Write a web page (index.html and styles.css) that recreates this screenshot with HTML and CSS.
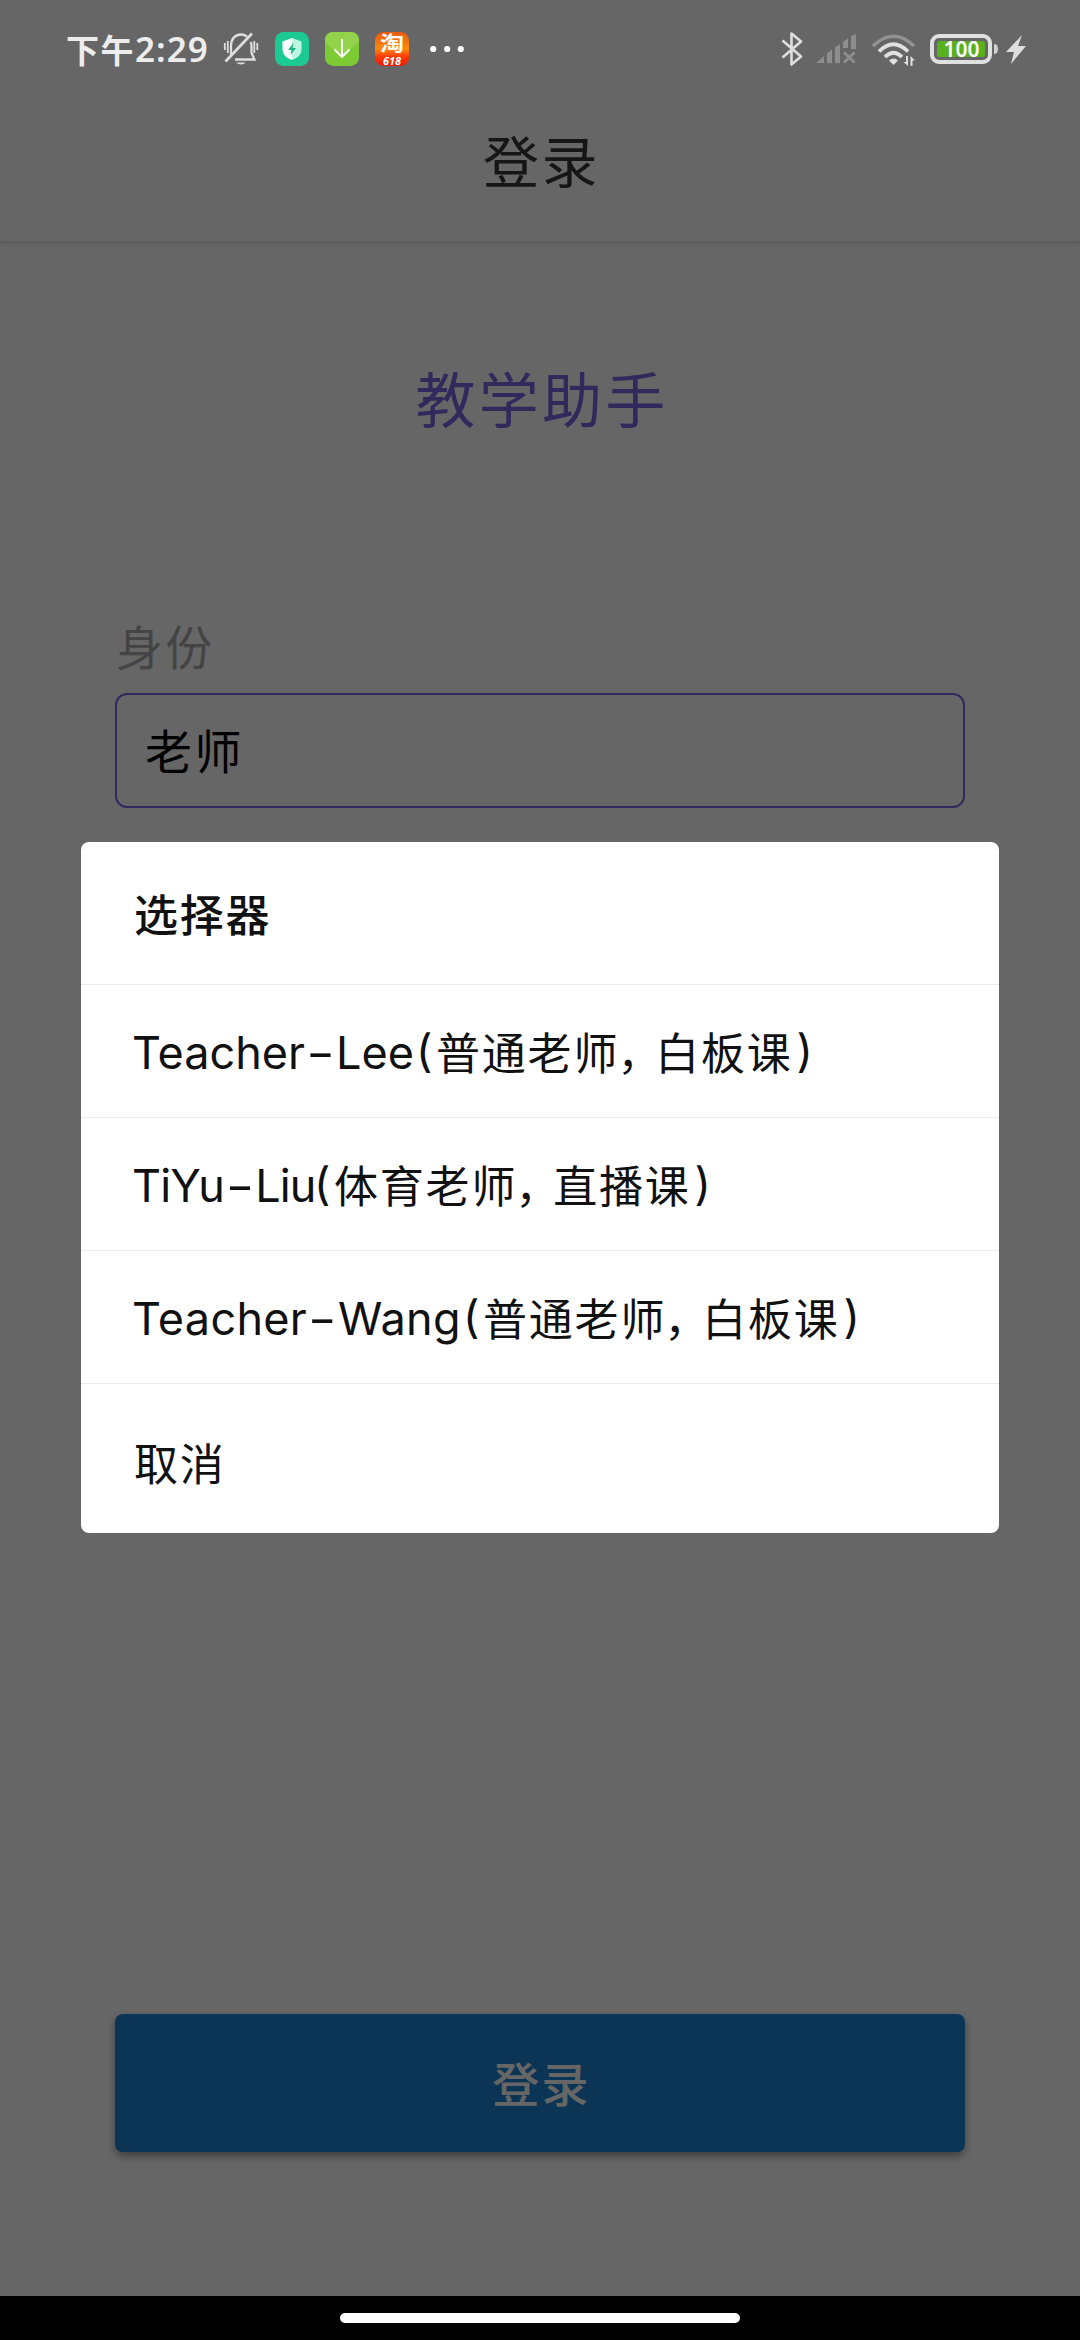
FILE: index.html
```html
<!DOCTYPE html>
<html lang="zh-CN">
<head>
<meta charset="utf-8">
<title>登录</title>
<link rel="stylesheet" href="styles.css">
</head>
<body>
<div class="screen">
  <div class="status">
    <div class="time"><span>下午</span><span class="clock">2:29</span></div>
    <div class="notices">
      <svg width="36" height="36" viewBox="0 0 36 36" fill="none" stroke="#dedede" stroke-width="2.300">
        <path d="M8 24V15C8 8 12 3.500 18 3.500C20.500 3.500 22.500 4.300 24 5.500M28 11Q28.500 13 28.500 16V22L31.500 28.500H12"/>
        <path d="M29 2.500 2.500 30.500" stroke-width="2.700"/>
        <path d="M1.800 12V19M4.800 10V22M31.300 10V22M34.300 12V19" stroke-width="1.800"/>
        <path d="M13 31.500H23Q18 35.500 13 31.500Z" fill="#dedede" stroke="none"/>
      </svg>
      <svg width="34" height="34" viewBox="0 0 34 34">
        <rect width="34" height="34" rx="8.500" fill="#1bc993"/>
        <path d="M17 6 26.500 9.500V18Q26 25 17 28Z" fill="#bdf7df"/><path d="M17 6 7.500 9.500V18Q8 25 17 28Z" fill="#fff"/>
        <path d="M18.500 11 13 18H16.500L15.500 23 21 16H17.500Z" fill="#14b783"/>
      </svg>
      <svg width="34" height="34" viewBox="0 0 34 34">
        <rect width="34" height="34" rx="8.500" fill="#7ccb35"/>
        <path d="M0 10V8.500Q0 0 8.500 0H25.500Q34 0 34 8.500V10L17 25Z" fill="#92d34b"/>
        <path d="M17 7V24.500M9.500 17.500 17 25 24.500 17.500" fill="none" stroke="#fff" stroke-width="1.800"/>
      </svg>
      <svg class="shop" width="34" height="34" viewBox="0 0 34 34">
        <defs><linearGradient id="tb" x1="0" y1="0" x2="0" y2="1"><stop offset="0" stop-color="#e85a10"/><stop offset=".5" stop-color="#fb8a10"/><stop offset=".72" stop-color="#fb3d0a"/><stop offset="1" stop-color="#ee1a05"/></linearGradient></defs>
        <rect width="34" height="34" rx="8.500" fill="url(#tb)"/>
        <text class="tao" x="17" y="18.500" text-anchor="middle" textLength="24" lengthAdjust="spacingAndGlyphs">淘</text>
        <text class="sale" x="17" y="33" text-anchor="middle" textLength="18" lengthAdjust="spacingAndGlyphs">618</text>
      </svg>
      <svg class="more" width="34" height="34" viewBox="0 0 34 34" fill="#fff"><circle cx="3.200" cy="17" r="3.100"/><circle cx="17.200" cy="17" r="3.100"/><circle cx="30.800" cy="17" r="3.100"/></svg>
    </div>
    <div class="system">
      <svg width="22" height="34" viewBox="0 0 22 34" fill="none" stroke="#dedede" stroke-width="2.600"><path d="M1.500 8.500 20 24.500 10.500 32.500V1.500L20 9.500 1.500 25.500" stroke-linejoin="round"/></svg>
      <svg class="signal" width="41" height="34" viewBox="0 0 41 34" fill="#8e8e8e">
        <path d="M0 31 8 24V31ZM11 21.500 16 17.500V31H11ZM19 15.500 24 12V31H19ZM27 10 32 6V16H27ZM35 4 40 2V17H35Z"/>
        <path d="M28 20.500 38.500 30.500M38.500 20.500 28 30.500" stroke="#8e8e8e" stroke-width="3"/>
      </svg>
      <svg class="wifi" width="43" height="34" viewBox="0 0 43 34" fill="none">
        <path d="M1 14Q21.500-5.500 42 14" stroke="#929292" stroke-width="3.400"/>
        <path d="M7 19.500Q21.500 5 36 19.500M13 25Q21.500 16.500 30 25" stroke="#e0e0e0" stroke-width="3.700"/>
        <path d="M17 28.500Q21.500 24.500 26 28.500L21.500 33Z" fill="#e0e0e0"/>
        <path d="M36 24V34L31.500 30H34V24ZM38.500 34V24L43 28.500H40.500V34Z" fill="#e0e0e0"/>
      </svg>
      <svg class="battery" width="69" height="34" viewBox="0 0 69 34">
        <rect x="2" y="4" width="58" height="26" rx="7" fill="none" stroke="#e0e0e0" stroke-width="4"/>
        <rect x="7" y="9" width="48" height="16" rx="2.500" fill="#58b01e"/>
        <path d="M64 12Q68 12 68 17T64 22Z" fill="#d0d0d0"/>
        <text class="percent" x="31.500" y="25" text-anchor="middle" textLength="36" lengthAdjust="spacingAndGlyphs">100</text>
      </svg>
      <svg class="bolt" width="20" height="34" viewBox="0 0 20 34" fill="#dedede"><path d="M16 3 0 20H8L5 32 20 14H12Z"/></svg>
    </div>
  </div>
  <header class="bar">登录</header>
  <main class="form">
    <h1 class="brand">教学助手</h1>
    <label class="label">身份</label>
    <div class="field">老师</div>
    <button class="submit">登录</button>
  </main>
  <div class="scrim">
    <div class="dialog">
      <div class="heading">选择器</div>
      <div class="option"><span class="latin lee">Teacher<i>-</i>Lee</span><span class="paren">(</span><span>普通老师</span><span class="comma">，</span><span>白板课</span><span class="paren end">)</span></div>
      <div class="option"><span class="latin liu">TiYu<i>-</i>Liu</span><span class="paren">(</span><span>体育老师</span><span class="comma">，</span><span>直播课</span><span class="paren end">)</span></div>
      <div class="option"><span class="latin wang">Teacher<i>-</i>Wang</span><span class="paren">(</span><span>普通老师</span><span class="comma">，</span><span>白板课</span><span class="paren end">)</span></div>
      <div class="cancel">取消</div>
    </div>
  </div>
  <footer class="nav"><div class="handle"></div></footer>
</div>
</body>
</html>
```
FILE: styles.css
```css
* { box-sizing: border-box; }
body { margin: 0; font-family: "Noto Sans CJK SC", sans-serif; }
.screen { position: relative; width: 1080px; height: 2340px; display: flex; flex-direction: column; background: #fff; overflow: hidden; }
.status { position: relative; z-index: 2; height: 98px; display: flex; padding: 0 54px 0 66px; align-items: center; }
.time { width: 157px; display: flex; align-items: center; padding-bottom: 1px; font-size: 33px; font-weight: 700; letter-spacing: 1.5px; color: #ededed; }
.clock { font-family: "Noto Sans", sans-serif; font-size: 35px; font-weight: 600; letter-spacing: 1px; }
.notices { display: flex; align-items: center; gap: 16px; }
.more { margin-left: 5px; }
.system { display: flex; align-items: center; margin-left: auto; }
.signal { margin-left: 13px; }
.wifi { margin-left: 15px; }
.battery { margin-left: 15px; }
.bolt { margin-left: 7px; }
.shop { overflow: visible; }
.tao { font-size: 20px; font-weight: 700; fill: #fff; }
.sale { font: italic 700 11px "Noto Sans", sans-serif; fill: #fff; }
.percent { font: 600 22px "Noto Sans", sans-serif; fill: #fff; }
.bar { height: 143px; display: flex; align-items: center; justify-content: center; padding: 0 0 23px 3px; font-size: 56px; letter-spacing: 2.5px; color: #373737; box-shadow: 0 1px 6px rgba(0,0,0,.2); clip-path: inset(0 0 -12px); }
.form { flex: 1; display: flex; flex-direction: column; padding: 108px 115px 144px; }
.brand { margin: 0; text-align: center; font-size: 60px; line-height: 96px; font-weight: 400; letter-spacing: 3.2px; padding-left: 4px; color: #7c66e3; }
.label { margin-top: 165px; height: 70px; line-height: 70px; padding-left: 1px; font-size: 47px; letter-spacing: 2.3px; color: #aaa; }
.field { margin-top: 13px; height: 115px; line-height: 108px; padding-left: 28px; border: 2px solid #7c66e3; border-radius: 12px; font-size: 47px; letter-spacing: 2.6px; color: #000; }
.submit { margin-top: auto; height: 138px; border: 0; border-radius: 8px; padding: 0 0 4px 3px; background: #1e82d2; color: #fff; font: 500 47px "Noto Sans CJK SC", sans-serif; letter-spacing: 2.3px; box-shadow: 0 4px 9px rgba(0,0,0,.4); }
.scrim { position: absolute; inset: 0 0 44px; z-index: 1; display: flex; justify-content: center; align-items: flex-start; padding-top: 842px; background: rgba(0,0,0,.6); }
.dialog { width: 918px; height: 691px; border-radius: 8px; background: #fff; overflow: hidden; color: #111; font-size: 44px; letter-spacing: 1.8px; }
.heading { height: 143px; line-height: 142px; padding-left: 53px; border-bottom: 1px solid #ececec; font-weight: 500; }
.option { display: flex; height: 133px; line-height: 132px; padding-left: 51px; border-bottom: 1px solid #ececec; white-space: nowrap; }
.latin, .paren { font-family: Inter, sans-serif; font-size: 45px; letter-spacing: 0; line-height: 136px; height: 132px; }
.latin i { display: inline-block; width: 31px; text-align: center; font-style: normal; transform: scaleX(1.4); }
.lee { width: 284px; }
.liu { width: 182px; letter-spacing: -.8px; }
.wang { width: 331px; letter-spacing: .3px; }
.paren { width: 20px; line-height: 132px; }
.end { margin-left: 4px; }
.comma { width: 38px; margin-left: -2px; }
.cancel { line-height: 156px; padding-left: 53px; }
.nav { height: 44px; display: flex; align-items: flex-start; justify-content: center; padding-top: 17px; background: #000; }
.handle { width: 400px; height: 10px; border-radius: 5px; background: #fff; }
```
